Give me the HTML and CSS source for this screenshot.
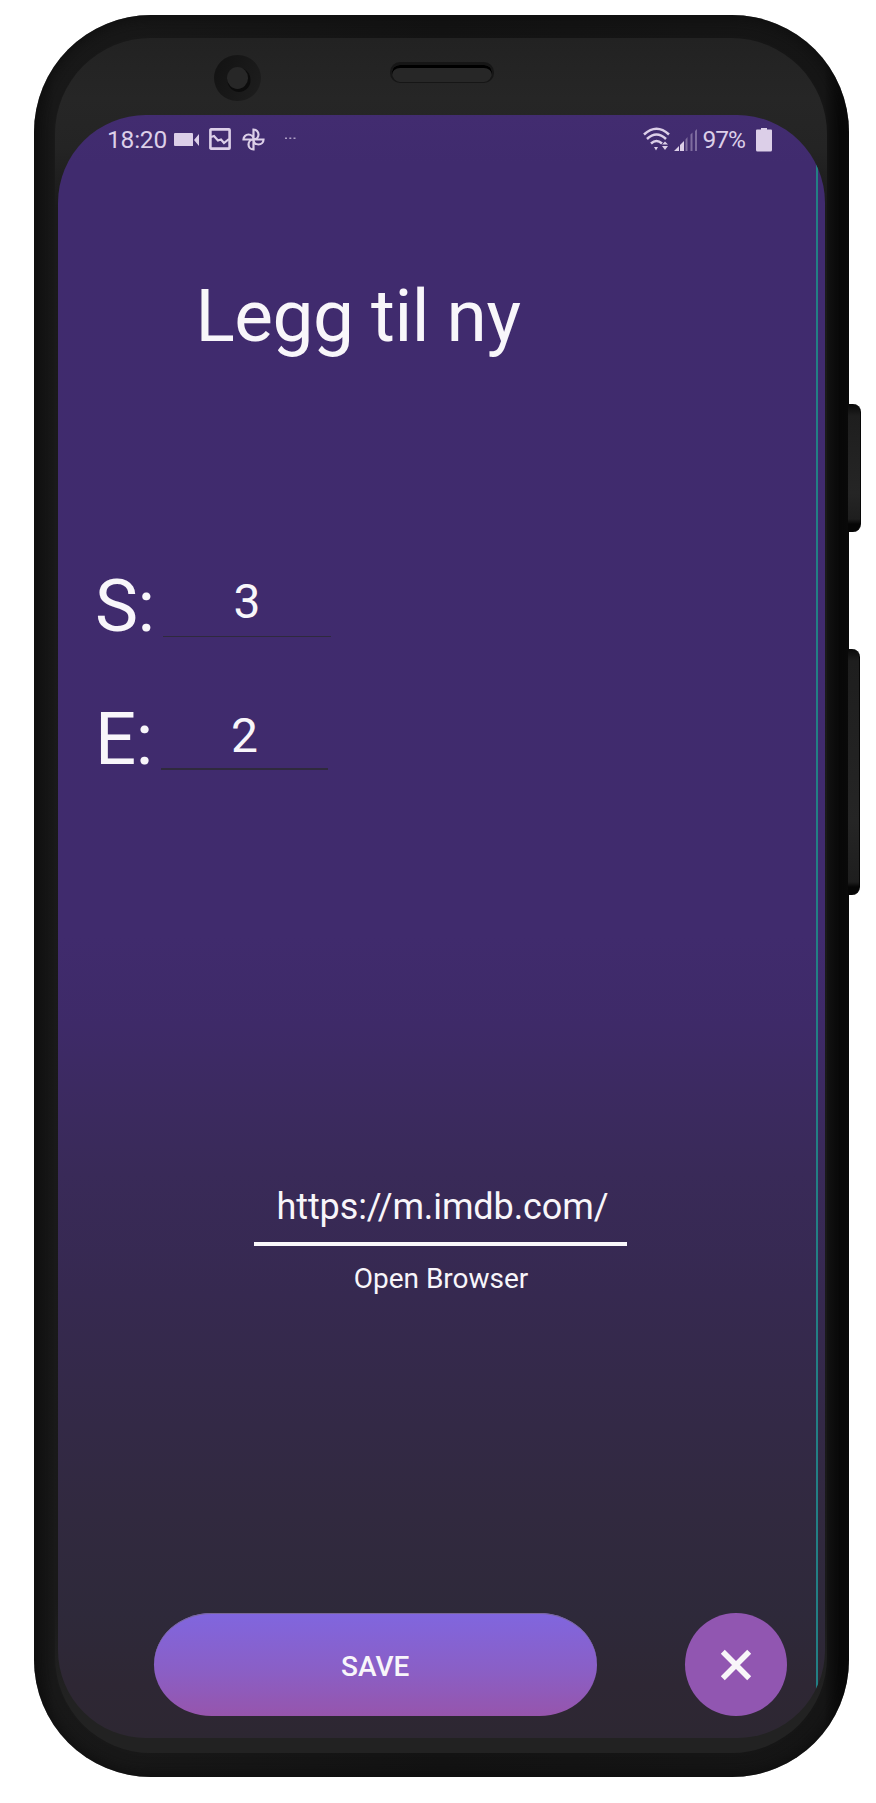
FILE: index.html
```
<!DOCTYPE html>
<html lang="no">
<head>
<meta charset="utf-8">
<title>Legg til ny</title>
<link rel="stylesheet" href="styles.css">
</head>
<body>
<div class="phone">
  <span class="side-key power"></span>
  <span class="side-key volume"></span>
  <div class="face">
    <div class="bezel">
      <span class="camera"><span class="lens"></span></span>
      <span class="speaker"></span>
    </div>
    <main class="screen">
      <div class="edge-line"></div>
      <div class="status">
        <span class="time">18:20</span>
        <svg class="video" width="26" height="14" viewBox="0 0 26 14"><path d="M1 0h17q1 0 1 1v12H1q-1 0-1-1V1q0-1 1-1zM20 7l5-6v12z"/></svg>
        <svg class="photo" width="22" height="22" viewBox="0 0 22 22"><rect x="1.4" y="1.4" width="19.2" height="19.2" rx=".6" fill="none" stroke-width="2.6"/><path d="M2 9l3-1 4 4.500 3-1 3 3.500 5-4" fill="none" stroke-width="2.200"/></svg>
        <svg class="pinwheel" width="23" height="23" viewBox="0 0 23 23" fill="none" stroke-width="2.2"><path d="M11.500 11.500V1.500a5 5 0 0 1 0 10h10a5 5 0 0 1-10 0v10a5 5 0 0 1 0-10h-10a5 5 0 0 1 10 0"/></svg>
        <svg class="dots" width="11" height="3" viewBox="0 0 11 3"><path d="M0 .5h2v1.500H0zM4.300 .5h2v1.500h-2zM8.500 .5h2v1.500h-2z"/></svg>
        <svg class="wifi" width="27" height="24" viewBox="0 0 27 24"><path d="M1 7.500Q13.500-4 26 7.500M4 12Q13.500 3 23 12M8 16.500q5.500-5 11 0" fill="none" stroke-width="2.500"/><path d="M11 20h4l-2 3.500zM22 14.500l3 3h-6zM19 19h6l-3 4z" stroke="none"/></svg>
        <svg class="signal" width="24" height="23" viewBox="0 0 24 23" stroke="none"><path d="M0 22l5-5v5zM6 16l4-4v10H6z"/><path opacity=".4" d="M11.500 10.500L13.500 8v14h-2zM16.500 5.500l2-2V22h-2zM21 2l2-2v22h-2z"/></svg>
        <span class="percent">97%</span>
        <svg class="battery" width="16" height="24" viewBox="0 0 16 24" stroke="none"><path d="M5 0h6v1.500h4q1 0 1 1V22q0 1.500-1.500 1.500h-13Q0 23.500 0 22V2.500q0-1 1-1h4z"/></svg>
      </div>
      <h1 class="title">Legg til ny</h1>
      <div class="row season"><span class="label">S:</span><span class="field">3</span></div>
      <div class="row episode"><span class="label">E:</span><span class="field">2</span></div>
      <div class="address">https://m.imdb.com/</div>
      <div class="open">Open Browser</div>
      <div class="actions">
        <button class="save">SAVE</button>
        <button class="close" aria-label="Close"><svg width="34" height="34" viewBox="0 0 34 34"><path d="M3.800 3.800l26.400 26.400M30.200 3.800L3.800 30.200" fill="none" stroke="#f8f6f9" stroke-width="5.600"/></svg></button>
      </div>
    </main>
  </div>
</div>
</body>
</html>
```
FILE: styles.css
```
* { box-sizing: border-box; }
body { margin: 0; background: #fff; font-family: Roboto, sans-serif; color: #f8f6fa; }
.phone {
  position: relative;
  width: 815px;
  height: 1762px;
  margin: 15px 0 26px 33.5px;
  padding: 23px 21.5px 24px 21.5px;
  border-radius: 117px;
  background: linear-gradient(90deg, #111 0, #191919 20px, #131313 50%, #161616 790px, #080808 806px, #070707 100%);
  box-shadow: inset 0 0 16px 1px #0d0d0d;
}
.side-key { position: absolute; left: 814px; border-radius: 0 8px 8px 0; background: linear-gradient(#090909, #1e1e1e 12px, #252525 70%, #1e1e1e calc(100% - 13px), #060606 calc(100% - 8px)); border-right: 1.5px solid #060606; }
.power { top: 389px; width: 13px; height: 128px; }
.volume { top: 634px; width: 12px; height: 246px; }
.face {
  height: 1715px;
  padding: 0 2.5px;
  border-radius: 96px;
  background: linear-gradient(#222, #262626 60px, #242424 110px, #1a1a1a 170px, #191919 1560px, #222 1660px, #222);
}
.bezel { display: flex; align-items: flex-start; height: 77px; }
.camera { display: flex; width: 46.500px; height: 46.500px; margin: 16.500px 0 0 156.500px; padding: 12.500px; border-radius: 50%; background: linear-gradient(120deg, #121212, #1e1e1e); }
.lens { width: 22px; height: 22px; border-radius: 50%; background: #272727; box-shadow: 1.500px 2px 0 1px #0c0c0c; }
.speaker { width: 104px; height: 21px; margin: 24px 0 0 129.500px; border-radius: 10px; border: solid #161616; border-width: 3px 2px 1px; background: #272727; box-shadow: inset 0 3px 0 #000; }
.screen {
  position: relative;
  width: 767px;
  height: 1622.500px;
  overflow: hidden;
  border-radius: 88px;
  background: linear-gradient(#422c70 0, #402b6e 49px, #402b6d 820px, #3e2a68 910px, #392a58 1060px, #362950 1180px, #31293f 1400px, #2e293a 1500px, #2e2734 1570px, #2d2732 100%);
}
.edge-line { position: absolute; right: 7px; top: 49px; width: 1.500px; height: 1574px; background: #237f84; }
.status { display: flex; align-items: flex-start; height: 49px; padding-left: 49.500px; line-height: 50px; font-size: 24.500px; color: #dccfe8; }
.status svg { flex: none; fill: #dccfe8; stroke: #dccfe8; }
.status .video { margin: 17.500px 0 0 5px; stroke: none; }
.status .photo { margin: 13px 0 0 9px; fill: none; }
.status .pinwheel { margin: 12.500px 0 0 10.500px; fill: none; }
.status .dots { margin: 22px 0 0 20px; stroke: none; opacity: .7; }
.time { width: 62px; letter-spacing: -.2px; }
.status .wifi { margin: 12px 0 0 347px; }
.status .signal { margin: 14px 0 0 4px; stroke: none; }
.percent { width: 46px; margin-left: 5px; letter-spacing: -1px; }
.status .battery { margin: 12.500px 0 0 7px; stroke: none; }
.title { margin: 108.500px 0 0 138px; font-size: 73px; line-height: 86px; font-weight: 400; letter-spacing: -.5px; }
.row { display: flex; height: 86px; padding-left: 37.500px; font-size: 72.500px; line-height: 86px; }
.season { margin-top: 205px; }
.episode { margin-top: 47.500px; }
.label { width: 68px; white-space: nowrap; letter-spacing: -.5px; }
.field { width: 168px; height: 62.500px; margin-top: 10.500px; border-bottom: 1.500px solid #2f2a3d; font-size: 48px; line-height: 56px; text-align: center; }
.episode .field { width: 167px; margin-left: -2px; border-bottom-width: 2px; }
.address { width: 373px; height: 59.500px; margin: 403px 0 0 196px; padding-left: 5px; border-bottom: 4px solid #faf8fb; font-size: 36px; line-height: 42px; letter-spacing: -.1px; text-align: center; }
.open { width: 373px; margin: 16.500px 0 0 197px; font-size: 28px; line-height: 34px; text-align: center; }
.actions { display: flex; gap: 88px; margin: 317px 0 0 96px; }
.actions button { padding: 0; border: 0; font-family: inherit; color: inherit; height: 103px; }
.actions .save { width: 443.500px; padding-top: 3px; border-radius: 58px / 52px; background: linear-gradient(#8066df, #8a5fc6 55%, #9655ac); box-shadow: inset 0 1px 0 #79689b; font-size: 28px; font-weight: 500; }
.actions .close { display: flex; align-items: center; justify-content: center; width: 101.500px; border-radius: 50%; background: #9156b1; }
```
